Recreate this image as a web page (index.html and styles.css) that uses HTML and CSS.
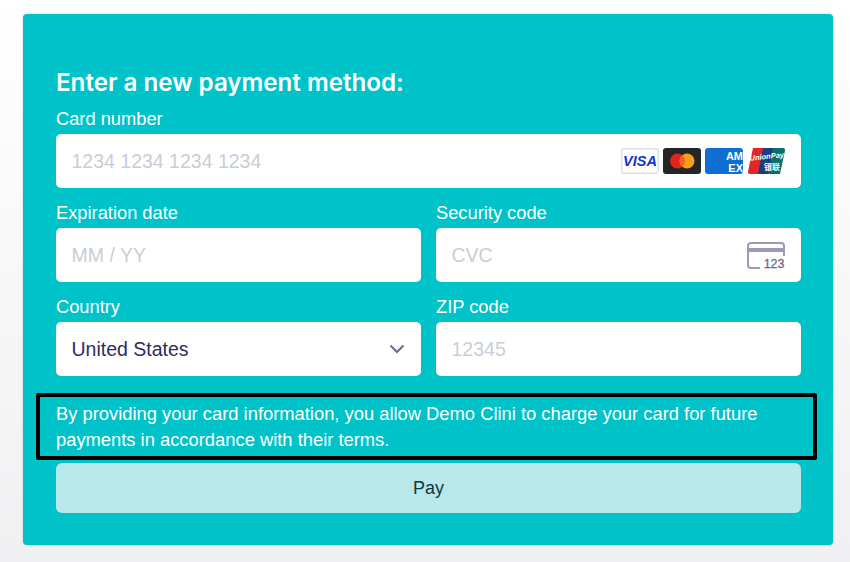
FILE: index.html
```html
<!DOCTYPE html>
<html lang="en">
<head>
<meta charset="utf-8">
<title>Payment</title>
<link rel="stylesheet" href="styles.css">
</head>
<body>
<main class="card">
  <h1 class="title">Enter a new payment method:</h1>
  <div class="field">
    <label class="label">Card number</label>
    <div class="input">
      <span class="placeholder">1234 1234 1234 1234</span>
      <span class="brands">
        <svg class="brand" width="38" height="26" viewBox="0 0 38 26"><rect x=".75" y=".75" width="36.500" height="24.500" rx="2.500" fill="#fff" stroke="#dcdfe3" stroke-width="1.500"/><text x="19" y="18" text-anchor="middle" class="visa">VISA</text></svg>
        <svg class="brand" width="38" height="26" viewBox="0 0 38 26"><rect width="38" height="26" rx="3" fill="#252525"/><circle cx="14.500" cy="13" r="7.500" fill="#e2231a"/><circle cx="24" cy="13" r="7.500" fill="#f79e1b"/><path d="M19.250 7.200a7.500 7.500 0 0 1 0 11.600a7.500 7.500 0 0 1 0-11.600z" fill="#f26122"/></svg>
        <svg class="brand" width="38" height="26" viewBox="0 0 38 26"><rect width="38" height="26" rx="3" fill="#0f6fd1"/><text x="38" y="11.500" text-anchor="end" class="amex">AM</text><text x="38" y="24" text-anchor="end" class="amex">EX</text></svg>
        <svg class="brand" width="38" height="26" viewBox="0 0 38 26"><path d="M6 0h12l-5 26H3a2 2 0 0 1-2-2.500z" fill="#e1252b"/><path d="M16 0h12l-5 26H11z" fill="#173f7e"/><path d="M26 0h10a2 2 0 0 1 2 2.500L33 26H21z" fill="#0b6f68"/><text x="20" y="11" text-anchor="middle" class="union" transform="rotate(-6 20 11)">UnionPay</text><text x="25" y="22" text-anchor="middle" class="unioncn">银联</text></svg>
      </span>
    </div>
  </div>
  <div class="row">
    <div class="field">
      <label class="label">Expiration date</label>
      <div class="input"><span class="placeholder">MM / YY</span></div>
    </div>
    <div class="field">
      <label class="label">Security code</label>
      <div class="input">
        <span class="placeholder">CVC</span>
        <svg class="cvc" width="38" height="32" viewBox="0 0 38 32"><path d="M13 29H4a3 3 0 0 1-3-3V7a3 3 0 0 1 3-3h30a3 3 0 0 1 3 3v10" fill="none" stroke="#9b9bb5" stroke-width="2"/><rect x="1" y="9" width="36" height="4" fill="#9b9bb5"/><text x="37.500" y="29" text-anchor="end" class="cvcnum">123</text></svg>
      </div>
    </div>
  </div>
  <div class="row">
    <div class="field">
      <label class="label">Country</label>
      <div class="input">
        <span class="value">United States</span>
        <svg class="chevron" width="16" height="10" viewBox="0 0 16 10"><path d="M1.500 1.500L8 8l6.500-6.500" fill="none" stroke="#6c6a8f" stroke-width="2"/></svg>
      </div>
    </div>
    <div class="field">
      <label class="label">ZIP code</label>
      <div class="input"><span class="placeholder">12345</span></div>
    </div>
  </div>
  <p class="notice">By providing your card information, you allow Demo Clini to charge your card for future payments in accordance with their terms.</p>
  <button class="pay" type="button">Pay</button>
</main>
</body>
</html>
```
FILE: styles.css
```css
* { box-sizing: border-box; }
html, body { height: 100%; }
body {
  margin: 0;
  padding: 14px 17px 17px 23px;
  background: linear-gradient(#ffffff, #f0f0f2);
  font-family: "Liberation Sans", Arial, sans-serif;
}
.card {
  height: 531px;
  padding: 55px 32px 32px 33px;
  background: #00c2c9;
  border-radius: 4px;
  box-shadow: 0 0 2px rgba(120, 90, 90, .35);
  display: flex;
  flex-direction: column;
}
.title {
  margin: 0;
  height: 28px;
  color: #fff;
  font: 600 24.150px/28px Inter, sans-serif;
}
.field { flex: 1 1 0; min-width: 0; }
.label {
  display: block;
  height: 29px;
  margin-top: 6px;
  color: #fff;
  font-size: 18.300px;
  line-height: 28px;
}
.row { display: flex; gap: 15px; margin-top: 5px; }
.card > .field { flex: none; margin-top: 2px; }
.input {
  height: 54px;
  padding: 0 16px 0 15.500px;
  background: #fff;
  border-radius: 5px;
  display: flex;
  align-items: center;
  justify-content: space-between;
  font-size: 19.500px;
}
.placeholder { color: #c8ced6; }
.value { color: #2f2c5e; }
.brands { display: flex; gap: 4px; }
.brand { display: block; }
.visa { font: italic 700 14.500px "Liberation Sans", sans-serif; fill: #1434cb; }
.amex { font: 700 11px "Liberation Sans", sans-serif; fill: #fff; }
.union { font: italic 700 7.500px "Liberation Sans", sans-serif; fill: #fff; }
.unioncn { font: 700 8px "Noto Sans CJK SC", sans-serif; fill: #fff; }
.cvc { display: block; }
.cvcnum { font: 400 12.500px "Liberation Sans", sans-serif; fill: #6c6a8f; stroke: #6c6a8f; stroke-width: .3px; }
.chevron { display: block; }
.notice {
  margin: 17px -16px 3px -20px;
  height: 67px;
  padding: 4px 16px;
  border: 4px solid #000;
  border-radius: 2px;
  color: #fff;
  font-size: 18.350px;
  line-height: 26px;
}
.pay {
  height: 50px;
  padding: 0;
  border: 0;
  border-radius: 6px;
  background: #b9e8ec;
  color: #0c3a40;
  font: 18px "Liberation Sans", sans-serif;
}
```
